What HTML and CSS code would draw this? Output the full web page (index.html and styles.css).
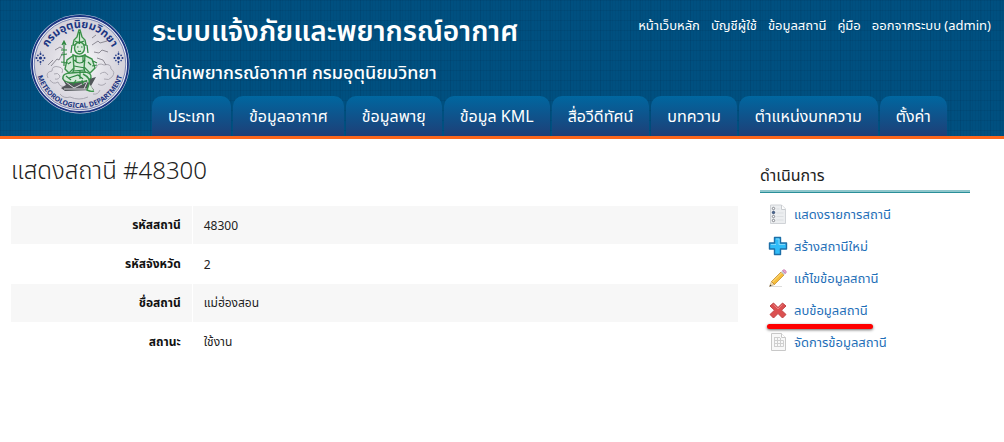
FILE: index.html
```
<!DOCTYPE html>
<html lang="th">
<head>
    <meta charset="UTF-8">
    <meta name="viewport" content="width=device-width, initial-scale=1.0">
    <title>ระบบแจ้งภัยและพยากรณ์อากาศ</title>
    <link rel="stylesheet" href="styles.css">
</head>
<body>
    <header class="header">
        <a class="logo" href="#">
            <svg viewBox="0 0 100 100" role="img" aria-label="กรมอุตุนิยมวิทยา">
                <defs>
                    <path id="arcTop" d="M14 50a36 36 0 0 1 72 0"/>
                    <path id="arcBottom" d="M6 50a44 44 0 0 0 88 0"/>
                    <radialGradient id="seal">
                        <stop offset="0" stop-color="#fff"/>
                        <stop offset="0.6" stop-color="#e0dee5"/>
                        <stop offset="1" stop-color="#d3d1da"/>
                    </radialGradient>
                    <g id="star" fill="#1c3582">
                        <circle r="1.6"/>
                        <circle cy="-4" r="1"/><circle cy="4" r="1"/>
                        <circle cx="-4" r="1"/><circle cx="4" r="1"/>
                        <circle cx="-2.6" cy="-2.6" r=".8"/><circle cx="2.6" cy="2.6" r=".8"/>
                        <circle cx="-2.6" cy="2.6" r=".8"/><circle cx="2.6" cy="-2.6" r=".8"/>
                        <circle cy="-6" r=".6"/><circle cy="6" r=".6"/>
                    </g>
                </defs>
                <circle cx="50" cy="50" r="49.5" fill="#cdd6e8"/>
                <circle cx="50" cy="50" r="48" fill="#f4f4fa" stroke="#1c3582" stroke-width="1.8"/>
                <circle cx="50" cy="50" r="45.8" fill="url(#seal)" stroke="#4a5d9c" stroke-width=".7"/>
                <text class="seal-thai"><textPath href="#arcTop" startOffset="50%">กรมอุตุนิยมวิทยา</textPath></text>
                <text class="seal-english"><textPath href="#arcBottom" startOffset="50%">METEOROLOGICAL DEPARTMENT</textPath></text>
                <use href="#star" x="10.5" y="44"/>
                <use href="#star" x="88.5" y="44"/>
                <!-- clouds and lightning -->
                <g fill="none" stroke="#a5a3ad" stroke-width=".9">
                    <path d="M18 64q-3-6 4-7q0-6 7-4q5 1 3 6M20 66q3 5 8 2q2 6 8 4M24 60q4-2 6 2q-1 4-5 3"/>
                    <path d="M66 54q2-6 8-3q7-2 7 4q5 3 1 8q-3 4-8 2M70 60q5-4 8 1M68 70q4 3 8-1M63 80q5 1 7-4"/>
                    <path d="M30 80q4 5 10 3q9 4 18 0"/>
                </g>
                <path d="M21 52l6-7 2 1 4-8M25 36l5-3 3 2M18 51l5-5M62 31l6-4 2 2 7-2M64 38l5 1 3-3 6 2M67 44l6 2 3 5M62 24l4-3" fill="none" stroke="#77757f" stroke-width=".8"/>
                <!-- throne -->
                <path d="M32 64l9 3 18-2 7-2-5 9 3 4-29 1-4-3 5-3z" fill="#52565a"/>
                <path d="M36 68l8 6 12-6M34 75h28M58 66l-4 9" fill="none" stroke="#d8d8dc" stroke-width="1"/>
                <!-- deity -->
                <g fill="#d5ead8" stroke="#3a9149" stroke-width="1.4">
                    <path d="M44 41l-7 5-2 9 4 4 8-8M54 41l8 4 3 9-5 5-7-7"/>
                    <path d="M43 41q6 3 12 0l-1 14 3 8H41l3-8z"/>
                    <path d="M41 59q-9 0-8 6q3 5 16 3q8 0 12-4q1-6-8-6z"/>
                    <path d="M53 60q8 4 6 10l-2 6q4 2 7 1M49 16l-2 7-3 3-1 5h13l-1-5-3-3-2-7z"/>
                    <ellipse cx="49.5" cy="34" rx="5" ry="6"/>
                </g>
                <g fill="none" stroke="#2f8740" stroke-width="1.2">
                    <path d="M47 33h1.5M51 33h1.5M48 37q1.5 1 3 0M49.5 18v12M45 27l4 2 5-2M42 31l-1 8M57 31l1 8"/>
                    <path d="M44 46q6 6 11 0M46 42v5M53 42v5M44 52l11 2M43 57l12-1M39 64l9-3 5 4M36 62l5 4M50 56v9"/>
                    <path d="M34 28v24M32 31l2-4 2 4M31 36h6M31 41l6-1M31 48l7 1M63 47l4 2M62 52l5-1"/>
                    <path d="M46 66l-3 5M52 66l1 5M38 50l3-2M58 48l3 3"/>
                </g>
            </svg>
        </a>
        <div class="banner">
            <div class="banner-top">
                <div class="titles">
                    <h1>ระบบแจ้งภัยและพยากรณ์อากาศ</h1>
                    <p>สำนักพยากรณ์อากาศ กรมอุตุนิยมวิทยา</p>
                </div>
                <nav class="user-menu">
                    <a href="#">หน้าเว็บหลัก</a>
                    <a href="#">บัญชีผู้ใช้</a>
                    <a href="#">ข้อมูลสถานี</a>
                    <a href="#">คู่มือ</a>
                    <a href="#">ออกจากระบบ (admin)</a>
                </nav>
            </div>
            <nav class="main-menu">
                <a href="#">ประเภท</a>
                <a href="#">ข้อมูลอากาศ</a>
                <a href="#">ข้อมูลพายุ</a>
                <a href="#">ข้อมูล KML</a>
                <a href="#">สื่อวีดีทัศน์</a>
                <a href="#">บทความ</a>
                <a href="#">ตำแหน่งบทความ</a>
                <a href="#">ตั้งค่า</a>
            </nav>
        </div>
    </header>

    <div class="container">
        <main class="content">
            <h2>แสดงสถานี #48300</h2>
            <table class="detail">
                <tr><th scope="row">รหัสสถานี</th><td>48300</td></tr>
                <tr><th scope="row">รหัสจังหวัด</th><td>2</td></tr>
                <tr><th scope="row">ชื่อสถานี</th><td>แม่ฮ่องสอน</td></tr>
                <tr><th scope="row">สถานะ</th><td>ใช้งาน</td></tr>
            </table>
        </main>
        <aside class="sidebar">
            <h3>ดำเนินการ</h3>
            <ul class="operations">
                <li>
                    <a href="#">
                        <svg viewBox="0 0 20 20" aria-hidden="true">
                            <path d="M2.5 1h11l4 4v14.500h-15z" fill="#eceef0" stroke="#d0d3d7"/>
                            <path d="M13.500 1v4.500h4" fill="#fff" stroke="#c9ccd0"/>
                            <path d="M8.500 5h3M8.500 9h7M8.500 12.500h7M8.500 16h7" stroke="#dcdfe2"/>
                            <g fill="#fff" stroke="#777b82" stroke-width=".9">
                                <circle cx="5.5" cy="4.5" r="1.200"/>
                                <circle cx="5.5" cy="8.5" r="1.200" fill="#4a6a9a" stroke="#34496b"/>
                                <circle cx="5.5" cy="12.5" r="1.200"/>
                                <circle cx="5.5" cy="16.5" r="1.200"/>
                            </g>
                        </svg>
                        แสดงรายการสถานี
                    </a>
                </li>
                <li>
                    <a href="#">
                        <svg viewBox="0 0 20 20" aria-hidden="true">
                            <path d="M6.500 1.500h6v5.500h6v6h-6v5.500h-6V13h-5V7h5z" fill="#30bcf8" stroke="#1d6fa8" stroke-width="1.400" stroke-linejoin="round"/>
                            <path d="M8 3h3v5.500h6M3 8.500h5" fill="none" stroke="#7fd6fa"/>
                        </svg>
                        สร้างสถานีใหม่
                    </a>
                </li>
                <li>
                    <a href="#">
                        <svg viewBox="0 0 20 20" aria-hidden="true">
                            <path d="M2 18.500h12" stroke="#ddd"/>
                            <path d="M1.500 18.500l2-5 3 3z" fill="#f3dcb0" stroke="#a98a55" stroke-width=".5"/>
                            <path d="M1.500 18.500l.8-2 1.200 1.200z" fill="#333"/>
                            <path d="M3.500 13.500L13 4l3 3-9.500 9.500z" fill="#f6bd3a" stroke="#c08420" stroke-width=".7"/>
                            <path d="M4.500 14l9.500-9.500" stroke="#fbe08c"/>
                            <path d="M13 4l1.500-1.500 3 3L16 7z" fill="#c8ccd4"/>
                            <path d="M14.500 2.500q1.500-1.500 3 0t0 3z" fill="#eba6d3" stroke="#cd86b8" stroke-width="1"/>
                        </svg>
                        แก้ไขข้อมูลสถานี
                    </a>
                </li>
                <li class="marked">
                    <a href="#">
                        <svg viewBox="0 0 20 20" aria-hidden="true">
                            <path d="M5.500 3L10 7.500 14.500 3 18 6l-4.500 4.200L18 14.500 14.500 18 10 13.500 5.500 18 2 14.500l4.500-4.300L2 6z" fill="#dc5050" stroke="#c04446" stroke-linejoin="round"/>
                            <path d="M5.500 4.500L10 9l4.500-4.500" fill="none" stroke="#ea8080"/>
                        </svg>
                        ลบข้อมูลสถานี
                    </a>
                </li>
                <li>
                    <a href="#">
                        <svg viewBox="0 0 20 20" aria-hidden="true">
                            <path d="M3.500 1.500h10l4 4v13h-14z" fill="#f8f8f8" stroke="#c8c8c8"/>
                            <path d="M13.500 1.500v4h4" fill="#fff" stroke="#c8c8c8"/>
                            <path d="M6 5.500h6M6 8.500h9.500M6 11.500h9.500M6 14.500h9.500M6.500 5.500v9M9.500 5.500v9M12.500 6v8.500M15.500 8.500v6" fill="none" stroke="#cfcfcf"/>
                        </svg>
                        จัดการข้อมูลสถานี
                    </a>
                </li>
            </ul>
        </aside>
    </div>
</body>
</html>
```
FILE: styles.css
```
body {
    font-family: "Noto Sans", "Noto Sans Thai", sans-serif;
    margin: 0;
    font-size: 12px;
    color: #222;
    background-color: #fff;
}

a {
    text-decoration: none;
}

h1, h2, h3, p, ul {
    margin: 0;
    padding: 0;
}

.header {
    display: flex;
    background-color: #005080;
    background-image:
        repeating-linear-gradient(90deg, rgba(0, 30, 60, 0.1) 0 1px, transparent 1px 10px),
        repeating-linear-gradient(rgba(0, 30, 60, 0.1) 0 1px, transparent 1px 10px),
        repeating-linear-gradient(90deg, rgba(0, 30, 60, 0.06) 0 1px, transparent 1px 3px);
    color: white;
    border-bottom: 3px solid #ff671b;
}

.header a {
    color: white;
}

.logo {
    width: 100px;
    margin: 14px 22px 0 30px;
}

.logo svg {
    display: block;
}

.seal-thai {
    font-size: 11px;
    font-weight: bold;
    fill: #1c3582;
    text-anchor: middle;
}

.seal-english {
    font-size: 7px;
    font-weight: bold;
    fill: #1c3582;
    text-anchor: middle;
}

.banner {
    flex: 1;
}

.banner-top {
    display: flex;
    justify-content: space-between;
    height: 96px;
}

.titles h1 {
    margin-top: 10px;
    font-size: 28px;
    font-weight: 600;
    line-height: 40px;
}

.titles p {
    margin-top: 6px;
    font-size: 18px;
    font-weight: 500;
    line-height: 32px;
}

.user-menu {
    display: flex;
    gap: 11px;
    margin: 15px 13px 0 0;
    font-size: 13px;
    line-height: 20px;
}

.main-menu {
    display: flex;
    gap: 2px;
}

.main-menu a {
    padding: 0 16px;
    font-size: 16px;
    line-height: 40px;
    border-radius: 10px 10px 0 0;
    background: linear-gradient(#0067a0, #1e3f77);
}

.container {
    display: flex;
    gap: 22px;
    padding: 0 34px 0 11px;
}

.content {
    flex: 1;
}

.content h2 {
    margin-top: 11px;
    font-size: 24px;
    font-weight: 300;
    line-height: 40px;
}

.detail {
    width: 100%;
    margin-top: 15px;
    border-collapse: separate;
    border-spacing: 0 1px;
}

.detail th,
.detail td {
    height: 38px;
    padding: 0 11px;
    box-sizing: border-box;
}

.detail th {
    width: 25%;
    text-align: right;
    color: #111;
    border-right: 1px solid #fff;
}

.detail tr:nth-child(odd) th,
.detail tr:nth-child(odd) td {
    background-color: #f7f7f7;
}

.sidebar {
    width: 210px;
}

.sidebar h3 {
    margin-top: 21px;
    font-size: 16px;
    font-weight: normal;
    line-height: 30px;
    border-bottom: 2px solid #8fc7cc;
    box-shadow: 0 1px #2a8f99;
}

.operations {
    margin-top: 6px;
    list-style: none;
}

.operations li {
    position: relative;
}

.operations a {
    display: flex;
    align-items: center;
    gap: 6px;
    padding-left: 8px;
    color: #1f6fb8;
    font-size: 13px;
    line-height: 32px;
}

.operations svg {
    width: 20px;
    height: 20px;
}

.marked::after {
    content: "";
    position: absolute;
    left: 7px;
    bottom: -3px;
    z-index: 1;
    width: 106px;
    height: 5px;
    border-radius: 3px;
    background-color: #f00;
    box-shadow: 0 1px 3px rgba(0, 0, 0, 0.6);
}
```
